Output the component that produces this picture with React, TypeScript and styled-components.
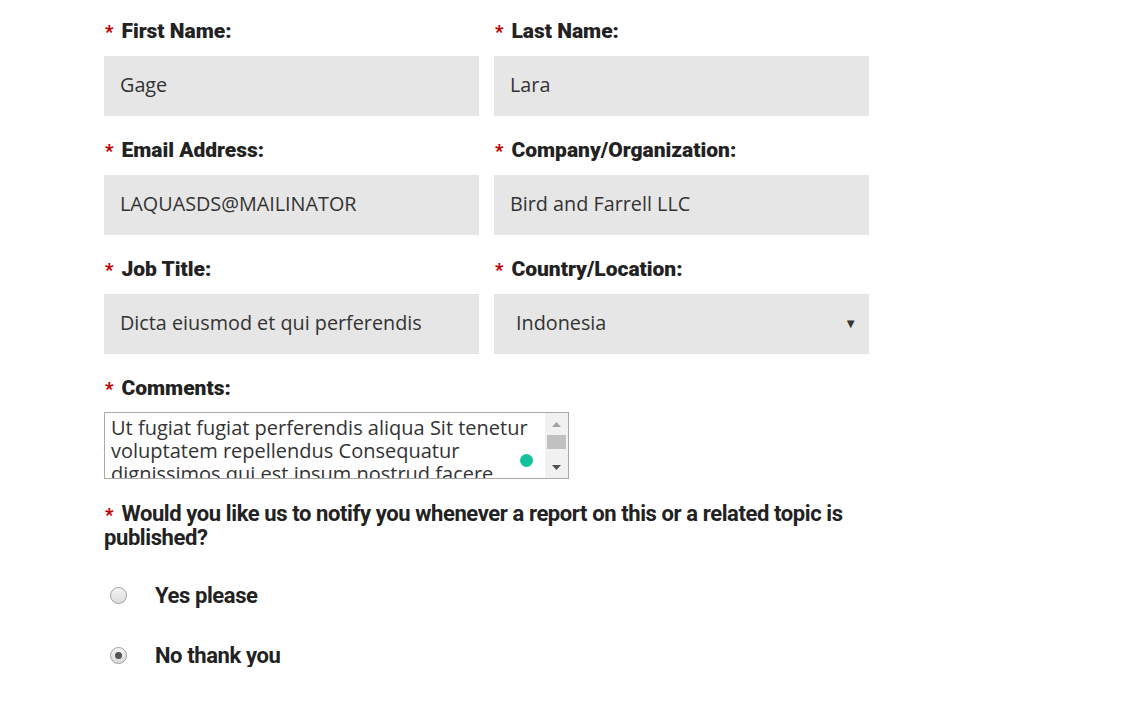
import React from "react";
import styled, { createGlobalStyle } from "styled-components";

const GlobalStyle = createGlobalStyle`
  html, body {
    margin: 0;
    padding: 0;
    background: #fff;
  }
  body {
    font-family: "Open Sans", "Liberation Sans", sans-serif;
    color: #333;
  }
`;

const fields = [
  { label: "First Name:", value: "Gage" },
  { label: "Last Name:", value: "Lara" },
  { label: "Email Address:", value: "LAQUASDS@MAILINATOR" },
  { label: "Company/Organization:", value: "Bird and Farrell LLC" },
  { label: "Job Title:", value: "Dicta eiusmod et qui perferendis" },
];

const comment =
  "Ut fugiat fugiat perferendis aliqua Sit tenetur voluptatem repellendus Consequatur dignissimos qui est ipsum nostrud facere";

const App = () => {
  return (
    <>
      <GlobalStyle />
      <Form>
        <Grid>
          {fields.map(f => (
            <Field key={f.label}>
              <Label>
                <Star>*</Star>
                {f.label}
              </Label>
              <Input>{f.value}</Input>
            </Field>
          ))}
          <Field>
            <Label>
              <Star>*</Star>
              Country/Location:
            </Label>
            <Select>
              <span>Indonesia</span>
              <Caret>▼</Caret>
            </Select>
          </Field>
        </Grid>

        <Field>
          <Label>
            <Star>*</Star>
            Comments:
          </Label>
          <TextBox>
            <TextContent>{comment}</TextContent>
            <GrammarDot />
            <ScrollBar>
              <ScrollArrow>
                <svg width="9" height="5" viewBox="0 0 9 5">
                  <path d="M0 5 L4.5 0 L9 5 Z" fill="#a3a3a3" />
                </svg>
              </ScrollArrow>
              <Thumb />
              <Track />
              <ScrollArrow>
                <svg width="9" height="5" viewBox="0 0 9 5">
                  <path d="M0 0 L4.5 5 L9 0 Z" fill="#505050" />
                </svg>
              </ScrollArrow>
            </ScrollBar>
          </TextBox>
        </Field>

        <Question>
          <Star>*</Star>
          Would you like us to notify you whenever a report on this or a related topic is published?
        </Question>

        <Options>
          <Option>
            <Radio checked={false} />
            <OptionText>Yes please</OptionText>
          </Option>
          <Option>
            <Radio checked />
            <OptionText>No thank you</OptionText>
          </Option>
        </Options>
      </Form>
    </>
  );
};

export default App;

const Form = styled.div`
  width: 765px;
  padding: 16px 0 0 104px;
`;

const Grid = styled.div`
  display: grid;
  grid-template-columns: 375px 375px;
  column-gap: 15px;
`;

const Field = styled.div`
  display: flex;
  flex-direction: column;
`;

const Label = styled.div`
  font-family: Roboto, "Liberation Sans", sans-serif;
  font-weight: 900;
  font-size: 21px;
  color: #222;
  height: 40px;
  line-height: 30px;
  letter-spacing: 0;
`;

const Star = styled.span`
  color: #c00000;
  font-family: Roboto, "Liberation Sans", sans-serif;
  font-weight: 900;
  font-size: 18px;
  letter-spacing: 0;
  margin: 0 8px 0 1px;
`;

const Input = styled.div`
  height: 60px;
  box-sizing: border-box;
  background: #e6e6e6;
  padding: 0 16px 3px;
  display: flex;
  align-items: center;
  font-size: 19.8px;
  color: #333;
  margin-bottom: 19px;
`;

const Select = styled(Input)`
  padding: 0 12px 3px 22px;
  justify-content: space-between;
`;

const Caret = styled.span`
  font-size: 13px;
  color: #333;
`;

const TextBox = styled.div`
  position: relative;
  width: 465px;
  height: 67px;
  box-sizing: border-box;
  border: 1px solid #a9a9a9;
  display: flex;
  overflow: hidden;
  margin-top: -1px;
`;

const TextContent = styled.div`
  flex: 1;
  padding: 3px 6px;
  font-size: 20px;
  line-height: 23px;
  color: #333;
  overflow: hidden;
`;

const GrammarDot = styled.div`
  position: absolute;
  right: 35px;
  top: 41px;
  width: 13px;
  height: 13px;
  border-radius: 50%;
  background: #15c39a;
`;

const ScrollBar = styled.div`
  width: 23px;
  background: #f1f1f1;
  display: flex;
  flex-direction: column;
`;

const ScrollArrow = styled.div`
  height: 22px;
  display: flex;
  align-items: center;
  justify-content: center;
`;

const Thumb = styled.div`
  height: 14px;
  margin: 0 2px;
  background: #c1c1c1;
`;

const Track = styled.div`
  flex: 1;
`;

const Question = styled.div`
  font-family: Roboto, "Liberation Sans", sans-serif;
  font-weight: 700;
  font-size: 22px;
  line-height: 23px;
  letter-spacing: -0.4px;
  color: #222;
  margin-top: 23px;
  width: 750px;
`;

const Options = styled.div`
  display: flex;
  flex-direction: column;
  gap: 36px;
  margin-top: 34px;
  padding-left: 6px;
`;

const Option = styled.div`
  display: flex;
  align-items: center;
  height: 24px;
`;

const Radio = styled.span<{ checked: boolean }>`
  width: 17px;
  height: 17px;
  box-sizing: border-box;
  border-radius: 50%;
  border: 1px solid #a0a0a0;
  background: linear-gradient(#f4f4f4, #dcdcdc);
  display: flex;
  align-items: center;
  justify-content: center;
  margin-right: 28px;
  &::after {
    content: "";
    width: 7px;
    height: 7px;
    border-radius: 50%;
    background: #555;
    display: ${props => (props.checked ? "block" : "none")};
  }
`;

const OptionText = styled.span`
  font-family: Roboto, "Liberation Sans", sans-serif;
  font-weight: 700;
  font-size: 22px;
  letter-spacing: -0.4px;
  color: #222;
`;
